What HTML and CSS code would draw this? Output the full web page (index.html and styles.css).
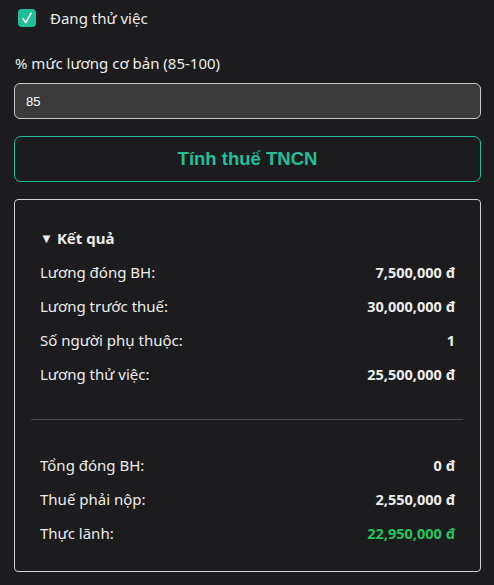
FILE: index.html
```html
<!DOCTYPE html>
<html lang="vi">
<head>
<meta charset="utf-8">
<link rel="stylesheet" href="styles.css">
</head>
<body>
<div class="page">
  <label class="check-row">
    <span class="checkbox">
      <svg viewBox="0 0 18 18" width="18" height="18"><path d="M5 9.8 L7.8 13.6 L13 4.4" fill="none" stroke="#fff" stroke-width="1.6" stroke-linecap="round" stroke-linejoin="round"/></svg>
    </span>
    <span class="check-text">Đang thử việc</span>
  </label>
  <div class="field-label">% mức lương cơ bản (85-100)</div>
  <div class="input">85</div>
  <button class="btn">Tính thuế TNCN</button>
  <div class="result">
    <div class="summary"><span class="tri">▼</span>Kết quả</div>
    <div class="rows">
      <div class="row"><span>Lương đóng BH:</span><b>7,500,000 đ</b></div>
      <div class="row"><span>Lương trước thuế:</span><b>30,000,000 đ</b></div>
      <div class="row"><span>Số người phụ thuộc:</span><b>1</b></div>
      <div class="row"><span>Lương thử việc:</span><b>25,500,000 đ</b></div>
    </div>
    <div class="divider"></div>
    <div class="rows">
      <div class="row"><span>Tổng đóng BH:</span><b>0 đ</b></div>
      <div class="row"><span>Thuế phải nộp:</span><b>2,550,000 đ</b></div>
      <div class="row"><span>Thực lãnh:</span><b class="green">22,950,000 đ</b></div>
    </div>
  </div>
</div>
</body>
</html>
```

FILE: styles.css
```css
html, body {
  margin: 0;
  padding: 0;
  background: #1c1c1e;
}
body {
  font-family: "Noto Sans", "Open Sans", sans-serif;
  color: #ececec;
  font-size: 15px;
}
.page {
  padding: 8px 13px 0 14px;
  display: flex;
  flex-direction: column;
}
.check-row {
  display: flex;
  align-items: center;
  height: 20px;
  padding-left: 4px;
  gap: 14px;
}
.checkbox {
  width: 18px;
  height: 18px;
  border-radius: 4px;
  background: #20bf98;
  display: flex;
}
.check-text {
  font-size: 15px;
}
.field-label {
  margin-top: 25px;
  line-height: 20px;
  padding-left: 1px;
}
.input {
  margin-top: 10px;
  height: 34px;
  box-sizing: content-box;
  border: 1px solid #c8c8c8;
  border-radius: 6px;
  background: #3a3a3a;
  font-family: "Liberation Sans", Arial, sans-serif;
  font-size: 13px;
  color: #fff;
  display: flex;
  align-items: center;
  padding-left: 11px;
}
.btn {
  margin-top: 17px;
  height: 46px;
  border: 1px solid #1fbf98;
  border-radius: 7px;
  background: transparent;
  color: #22bf99;
  font-family: "Liberation Sans", Arial, sans-serif;
  font-weight: bold;
  font-size: 18.5px;
  padding: 0;
}
.result {
  margin-top: 17px;
  border: 1px solid #cfcfcf;
  border-radius: 4px;
  padding: 28px 17px 21px 16px;
  display: flex;
  flex-direction: column;
}
.summary {
  height: 20px;
  line-height: 20px;
  font-weight: bold;
  padding-left: 9px;
  display: flex;
  align-items: center;
}
.tri {
  font-size: 13px;
  margin-right: 4px;
}
.rows {
  display: flex;
  flex-direction: column;
  margin-top: 7px;
}
.row {
  height: 34px;
  display: flex;
  align-items: center;
  justify-content: space-between;
  padding: 0 8px 0 9px;
}
.row b {
  font-weight: bold;
  font-size: 14.5px;
}
.green {
  color: #22c55e;
}
.divider {
  margin-top: 28px;
  height: 1px;
  background: #4e4e4e;
  margin-bottom: 21px;
}
```
